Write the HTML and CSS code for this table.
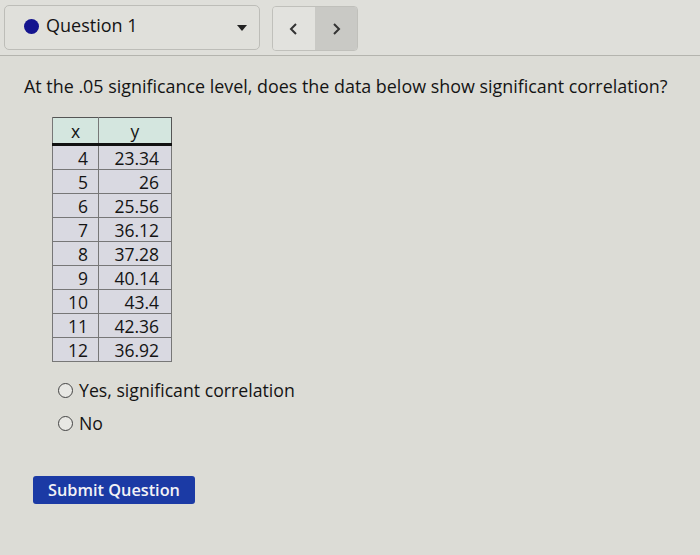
FILE: index.html
```html
<!DOCTYPE html>
<html>
<head>
<meta charset="utf-8">
<link rel="stylesheet" href="styles.css">
</head>
<body>
<div class="topbar">
  <div class="qselect">
    <span class="dot"></span>
    <span class="qlabel">Question 1</span>
    <span class="caret"></span>
  </div>
  <div class="nav">
    <div class="navbtn prev"><svg width="12" height="14" viewBox="0 0 12 14"><path d="M8 2 L3 7 L8 12" fill="none" stroke="#333" stroke-width="2"/></svg></div>
    <div class="navbtn next"><svg width="12" height="14" viewBox="0 0 12 14"><path d="M4 2 L9 7 L4 12" fill="none" stroke="#333" stroke-width="2"/></svg></div>
  </div>
</div>
<div class="content">
  <p class="question">At the .05 significance level, does the data below show significant correlation?</p>
  <table class="data">
    <thead><tr><th class="cx">x</th><th class="cy">y</th></tr></thead>
    <tbody>
      <tr><td>4</td><td>23.34</td></tr>
      <tr><td>5</td><td>26</td></tr>
      <tr><td>6</td><td>25.56</td></tr>
      <tr><td>7</td><td>36.12</td></tr>
      <tr><td>8</td><td>37.28</td></tr>
      <tr><td>9</td><td>40.14</td></tr>
      <tr><td>10</td><td>43.4</td></tr>
      <tr><td>11</td><td>42.36</td></tr>
      <tr><td>12</td><td>36.92</td></tr>
    </tbody>
  </table>
  <div class="choices">
    <label class="choice"><span class="radio"></span>Yes, significant correlation</label>
    <label class="choice"><span class="radio"></span>No</label>
  </div>
  <button class="submit">Submit Question</button>
</div>
</body>
</html>
```
FILE: styles.css
```css
html, body {
  margin: 0;
  padding: 0;
}
body {
  background: #dcdcd6;
  font-family: "Open Sans", "DejaVu Sans", sans-serif;
  color: #141414;
  width: 700px;
  height: 555px;
  overflow: hidden;
}
.topbar {
  height: 56px;
  box-sizing: border-box;
  padding: 5px 4px;
  border-bottom: 1px solid #b4b4ae;
  display: flex;
  align-items: center;
  gap: 12px;
  background: #dfdfda;
}
.qselect {
  width: 256px;
  height: 45px;
  box-sizing: border-box;
  border: 1px solid #bdbdb8;
  border-radius: 5px;
  display: flex;
  align-items: center;
  padding: 0 12px 0 19px;
  background: #e0e0db;
}
.dot {
  width: 15px;
  height: 15px;
  border-radius: 50%;
  background: #14148f;
  margin-right: 7px;
  margin-top: -3px;
}
.qlabel {
  font-size: 18px;
  flex: 1;
  margin-top: -6px;
}
.caret {
  width: 0;
  height: 0;
  border-left: 5px solid transparent;
  border-right: 5px solid transparent;
  border-top: 6px solid #222;
}
.nav {
  display: flex;
  height: 43px;
  border: 1px solid #c0c0bb;
  border-radius: 4px;
  overflow: hidden;
  margin-top: 2px;
}
.navbtn {
  width: 42px;
  display: flex;
  align-items: center;
  justify-content: center;
}
.prev { background: #e2e2de; }
.next { background: #c9c9c5; }
.content {
  padding: 0 0 0 24px;
}
.question {
  margin: 18px 0 19px;
  font-size: 17.9px;
  line-height: 24px;
}
.data {
  margin-left: 28px;
  border-collapse: collapse;
  font-size: 17.5px;
  border: 1px solid #555;
}
.data th {
  background: #d4e6df;
  font-weight: normal;
  height: 25px;
  padding: 0;
  border-left: 1px solid #777;
  border-bottom: 3px solid #111;
  line-height: 20px;
}
.data th.cx { width: 45px; }
.data th.cy { width: 72px; }
.data td {
  background: #d9d9e1;
  height: 23px;
  padding: 0 12px 0 0;
  text-align: right;
  border: 1px solid #777;
  line-height: 22px;
}
.data td:first-child { padding-right: 10px; }
.choices {
  margin: 16px 0 0 34px;
  display: flex;
  flex-direction: column;
  gap: 8px;
}
.choice {
  display: flex;
  align-items: center;
  font-size: 17.7px;
  line-height: 25px;
}
.radio {
  width: 13px;
  height: 13px;
  border: 1.5px solid #444;
  border-radius: 50%;
  margin-right: 6px;
  background: #e8e8e4;
}
.submit {
  margin: 40px 0 0 9px;
  background: #1b3aa5;
  color: #f2f2f6;
  border: none;
  border-radius: 3px;
  font-family: "Open Sans", sans-serif;
  font-weight: 600;
  font-size: 16.3px;
  width: 162px;
  height: 28px;
  padding: 0;
  display: block;
}
```
